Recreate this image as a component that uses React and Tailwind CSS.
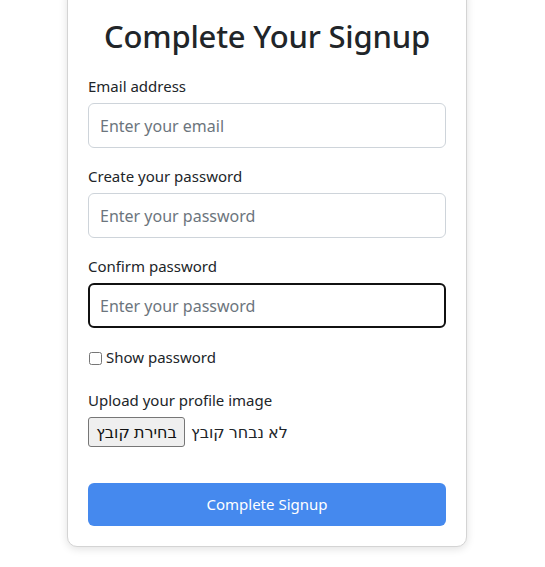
export default function App() {
  const field = 'w-full h-[45px] rounded-[6px] border border-[#ced4da] px-[11px] text-[16px] text-[#212529] placeholder:text-[#6c757d] outline-none bg-white'

  return (
    <div className="min-h-screen bg-white flex items-start pl-[67px] overflow-hidden" style={{ fontFamily: '"Noto Sans", "DejaVu Sans", sans-serif' }}>
      <div className="w-[400px] -mt-[13px] bg-white border border-[#d4d4d4] rounded-[10px] shadow-[0_2px_8px_rgba(0,0,0,0.12)] px-5 pt-[29px] pb-5">
        <h1 className="text-center text-[31px] leading-[38px] font-medium text-[#212529] tracking-[-0.2px]">Complete Your Signup</h1>

        <form className="mt-[19px] flex flex-col">
          <label className="text-[15px] leading-[24px] text-[#212529] mb-[5px]">Email address</label>
          <input type="email" placeholder="Enter your email" className={field} />

          <label className="mt-[16px] text-[15px] leading-[24px] text-[#212529] mb-[5px]">Create your password</label>
          <input type="password" placeholder="Enter your password" className={field} />

          <label className="mt-[16px] text-[15px] leading-[24px] text-[#212529] mb-[5px]">Confirm password</label>
          <input type="password" placeholder="Enter your password" className="w-full h-[45px] rounded-[6px] border-2 border-[#111] px-[10px] text-[16px] text-[#212529] placeholder:text-[#6c757d] outline-none bg-white" />

          <div className="mt-[17px] flex items-center gap-[4px] h-[24px]">
            <input type="checkbox" className="w-[13px] h-[13px] ml-[1px] mt-[3px] m-0" />
            <span className="text-[15px] leading-[24px] text-[#212529]">Show password</span>
          </div>

          <label className="mt-[19px] text-[15px] leading-[24px] text-[#212529] mb-[5px]">Upload your profile image</label>
          <div className="flex items-center gap-[6px] h-[30px]">
            <span className="h-[30px] w-[97px] flex items-center justify-center border border-[#767676] rounded-[3px] bg-[#efefef] text-[16px] text-[#111]">בחירת קובץ</span>
            <span className="text-[16px] text-[#212529]">לא נבחר קובץ</span>
          </div>

          <button type="button" className="mt-[36px] h-[43px] w-full rounded-[6px] bg-[#4589ee] text-white text-[15px]">Complete Signup</button>
        </form>
      </div>
    </div>
  )
}
